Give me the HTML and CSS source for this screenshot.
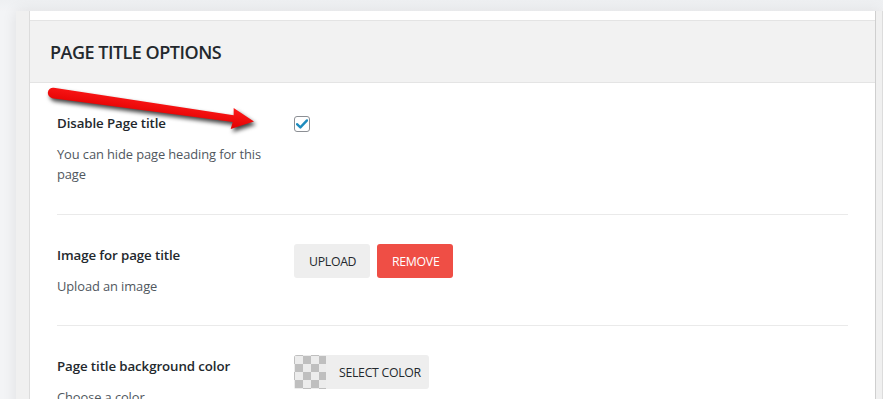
FILE: index.html
```html
<!DOCTYPE html>
<html>
<head>
<meta charset="utf-8">
<link rel="stylesheet" href="styles.css">
</head>
<body>
<div class="frame">
  <div class="card">
    <div class="head"><h2 class="head-title">PAGE TITLE OPTIONS</h2></div>
    <div class="body">
      <div class="row">
        <div class="info">
          <div class="label">Disable Page title</div>
          <div class="desc">You can hide page heading for this page</div>
        </div>
        <div class="field">
          <span class="check">
            <svg width="12" height="10" viewBox="0 0 12 10"><path d="M1 5.2 L4.4 8.4 L11 1.4" fill="none" stroke="#1e8cbe" stroke-width="2.4" stroke-linecap="round" stroke-linejoin="round"/></svg>
          </span>
        </div>
      </div>
      <div class="row">
        <div class="info">
          <div class="label">Image for page title</div>
          <div class="desc">Upload an image</div>
        </div>
        <div class="field">
          <button class="btn">UPLOAD</button>
          <button class="btn btn-red">REMOVE</button>
        </div>
      </div>
      <div class="row">
        <div class="info">
          <div class="label">Page title background color</div>
          <div class="desc">Choose a color</div>
        </div>
        <div class="field">
          <button class="btn btn-color"><span class="swatch"></span><span class="btn-color-text">SELECT COLOR</span></button>
        </div>
      </div>
    </div>
  </div>
  <svg class="arrow" width="260" height="60" viewBox="0 0 260 60">
    <defs>
      <linearGradient id="rg" x1="0" y1="0" x2="0" y2="1">
        <stop offset="0" stop-color="#ff1a1a"/>
        <stop offset="1" stop-color="#e00000"/>
      </linearGradient>
    </defs>
    <g transform="translate(37 13) rotate(8.1)">
      <path d="M0 -5.2 L182 -3.4 L181 -10.5 L203 0 L181 10.5 L182 3.4 L0 5.2 A5.2 5.2 0 0 1 0 -5.2 Z" fill="url(#rg)"/>
    </g>
  </svg>
</div>
</body>
</html>
```
FILE: styles.css
```css
html, body {
  margin: 0;
  padding: 0;
}
body {
  background: linear-gradient(#eef0f2, #f3f4f6 12px, #f3f4f6);
  font-family: "Open Sans", "Noto Sans", sans-serif;
  color: #23282d;
  height: 399px;
  overflow: hidden;
}
.frame {
  position: relative;
  margin: 11px 0 0 16px;
  padding: 0 6px 0 13px;
  background: #f0f0f0;
  border-right: 1px solid #dcdcdc;
  box-shadow: 0 0 14px rgba(0, 0, 0, 0.09);
  height: 400px;
}
.card {
  background: #fff;
  border-left: 1px solid #dcdcdc;
  border-right: 1px solid #cfcfcf;
  padding-top: 9px;
  height: 100%;
}
.head {
  background: #f2f2f2;
  border-top: 1px solid #e4e4e4;
  border-bottom: 1px solid #e4e4e4;
  height: 61px;
  display: flex;
  align-items: center;
  padding-left: 20px;
}
.head-title {
  margin: 0;
  font-size: 18px;
  font-weight: 600;
  letter-spacing: -0.5px;
  color: #23282d;
}
.body {
  padding: 0 27px;
}
.row {
  display: flex;
  padding: 30px 0 29px;
  border-bottom: 1px solid #eaeaea;
}
.row:first-child {
  padding-bottom: 30px;
}
.info {
  width: 237px;
  flex: none;
  padding-right: 20px;
  box-sizing: border-box;
}
.label {
  font-size: 13.3px;
  font-weight: 600;
  line-height: 20px;
  margin-bottom: 11px;
  letter-spacing: -0.1px;
}
.desc {
  font-size: 12.9px;
  line-height: 20px;
  color: #50575e;
  letter-spacing: -0.1px;
}
.field {
  display: flex;
  align-items: flex-start;
  gap: 7px;
}
.row + .row .field {
  margin-top: -1px;
}
.check {
  margin-top: 3px;
  width: 14px;
  height: 14px;
  border: 1px solid #8c8f94;
  border-radius: 3px;
  display: flex;
  align-items: center;
  justify-content: center;
  background: #fff;
}
.btn {
  font-family: "Open Sans", "Noto Sans", sans-serif;
  height: 34px;
  padding: 0 15px;
  border: none;
  border-radius: 3px;
  background: #eeeeee;
  color: #23282d;
  font-size: 12.3px;
  letter-spacing: -0.3px;
  width: 76px;
}
.btn-red {
  background: #ef4e45;
  color: #fff;
}
.btn-color {
  width: auto;
  display: flex;
  align-items: center;
  padding: 0 8px 0 0;
  overflow: hidden;
}
.swatch {
  width: 32px;
  height: 34px;
  background-color: #ececec;
  background-image: conic-gradient(#bfbfbf 25%, #ececec 0 50%, #bfbfbf 0 75%, #ececec 0);
  background-size: 16px 16px;
  background-position: 1px 1px;
}
.btn-color-text {
  margin-left: 13px;
}
.arrow {
  position: absolute;
  left: 0;
  top: 69px;
  filter: drop-shadow(2px 3px 2px rgba(0, 0, 0, 0.75));
}
```
